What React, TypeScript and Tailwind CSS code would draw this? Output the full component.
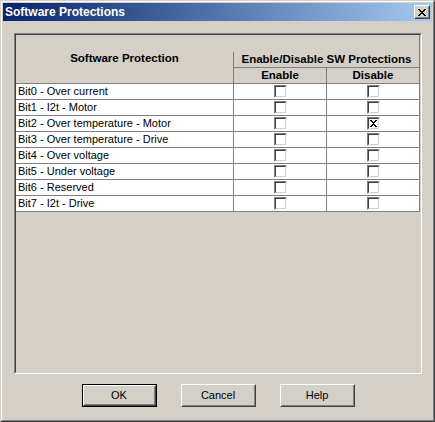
import React from "react";

const rows = [
  { label: "Bit0 - Over current", enable: false, disable: false },
  { label: "Bit1 - I2t - Motor", enable: false, disable: false },
  { label: "Bit2 - Over temperature - Motor", enable: false, disable: true },
  { label: "Bit3 - Over temperature - Drive", enable: false, disable: false },
  { label: "Bit4 - Over voltage", enable: false, disable: false },
  { label: "Bit5 - Under voltage", enable: false, disable: false },
  { label: "Bit6 - Reserved", enable: false, disable: false },
  { label: "Bit7 - I2t - Drive", enable: false, disable: false },
];

function CheckBox({ checked }: { checked: boolean }) {
  return (
    <div className="h-[13px] w-[13px] border border-t-[#808080] border-l-[#808080] border-r-white border-b-white">
      <div className="flex h-full w-full items-center justify-center border border-t-[#404040] border-l-[#404040] border-r-[#d4d0c8] border-b-[#d4d0c8] bg-white">
        {checked && (
          <svg width="7" height="7" viewBox="0 0 7 7" shapeRendering="crispEdges">
            <path d="M0 0h2v1h-2zM5 0h2v1h-2zM1 1h2v1h-2zM4 1h2v1h-2zM2 2h3v1h-3zM3 3h1v1h-1zM2 4h3v1h-3zM1 5h2v1h-2zM4 5h2v1h-2zM0 6h2v1h-2zM5 6h2v1h-2z" fill="#000" />
          </svg>
        )}
      </div>
    </div>
  );
}

function Button({ label, isDefault }: { label: string; isDefault?: boolean }) {
  const inner = (
    <div className="h-full w-full border border-t-white border-l-white border-r-[#404040] border-b-[#404040]">
      <div className="flex h-full w-full items-center justify-center border border-t-[#d4d0c8] border-l-[#d4d0c8] border-r-[#808080] border-b-[#808080] text-[11px] text-black">
        {label}
      </div>
    </div>
  );
  return (
    <div className={`h-[23px] w-[75px] ${isDefault ? "border border-black" : ""}`}>{inner}</div>
  );
}

export default function App() {
  return (
    <div className="h-[422px] w-[435px] font-['Liberation_Sans',Arial,sans-serif]">
      <div className="h-full w-full border border-t-[#d4d0c8] border-l-[#d4d0c8] border-r-[#404040] border-b-[#404040] bg-[#d4d0c8]">
        <div className="flex h-full w-full flex-col border border-t-white border-l-white border-r-[#808080] border-b-[#808080] p-px">
          {/* ── Title bar ── */}
          <div className="flex h-[18px] items-center justify-between bg-linear-to-r from-[#0a246a] to-[#a6caf0] pl-[2px] pr-[2px]">
            <span className="text-[12px] font-bold leading-none text-white">Software Protections</span>
            <div className="h-[14px] w-[16px] border border-t-white border-l-white border-r-[#404040] border-b-[#404040] bg-[#d4d0c8]">
              <div className="flex h-full w-full items-center justify-center border border-t-[#d4d0c8] border-l-[#d4d0c8] border-r-[#808080] border-b-[#808080]">
                <svg width="8" height="7" viewBox="0 0 8 7" shapeRendering="crispEdges">
                  <path d="M0 0h2v1h-2zM6 0h2v1h-2zM1 1h2v1h-2zM5 1h2v1h-2zM2 2h4v1h-4zM3 3h2v1h-2zM2 4h4v1h-4zM1 5h2v1h-2zM5 5h2v1h-2zM0 6h2v1h-2zM6 6h2v1h-2z" fill="#000" />
                </svg>
              </div>
            </div>
          </div>

          {/* ── Grid frame ── */}
          <div className="ml-[11px] mt-[12px] h-[341px] w-[408px] border border-t-[#808080] border-l-[#808080] border-r-white border-b-white">
            <div className="h-full w-full border border-t-[#404040] border-l-[#404040] border-r-[#d4d0c8] border-b-[#d4d0c8] bg-[#d4d0c8]">
              <div className="w-[404px] border-r border-[#808080]">
                {/* header */}
                <div className="flex h-[49px] border-b border-[#808080] text-[11.5px] font-bold text-black">
                  <div className="flex w-[217px] items-center justify-center">Software Protection</div>
                  <div className="flex w-[186px] flex-col">
                    <div className="h-[17px]" />
                    <div className="flex h-[16px] items-center justify-center border-b border-l border-[#808080]">
                      Enable/Disable SW Protections
                    </div>
                    <div className="flex h-[15px]">
                      <div className="flex w-[93px] items-center justify-center border-l border-[#808080]">Enable</div>
                      <div className="flex w-[93px] items-center justify-center border-l border-[#808080]">Disable</div>
                    </div>
                  </div>
                </div>
                {/* rows */}
                {rows.map((r) => (
                  <div key={r.label} className="flex h-[16px] border-b border-[#808080] bg-white text-[11px] text-black">
                    <div className="flex w-[217px] items-center pl-[2px] leading-none">{r.label}</div>
                    <div className="flex w-[93px] justify-center border-l border-[#808080] pt-[1px]">
                      <CheckBox checked={r.enable} />
                    </div>
                    <div className="flex w-[93px] justify-center border-l border-[#808080] pt-[1px]">
                      <CheckBox checked={r.disable} />
                    </div>
                  </div>
                ))}
              </div>
            </div>
          </div>

          {/* ── Buttons ── */}
          <div className="mt-[10px] flex justify-center gap-6 pl-[1px]">
            <Button label="OK" isDefault />
            <Button label="Cancel" />
            <Button label="Help" />
          </div>
        </div>
      </div>
    </div>
  );
}
